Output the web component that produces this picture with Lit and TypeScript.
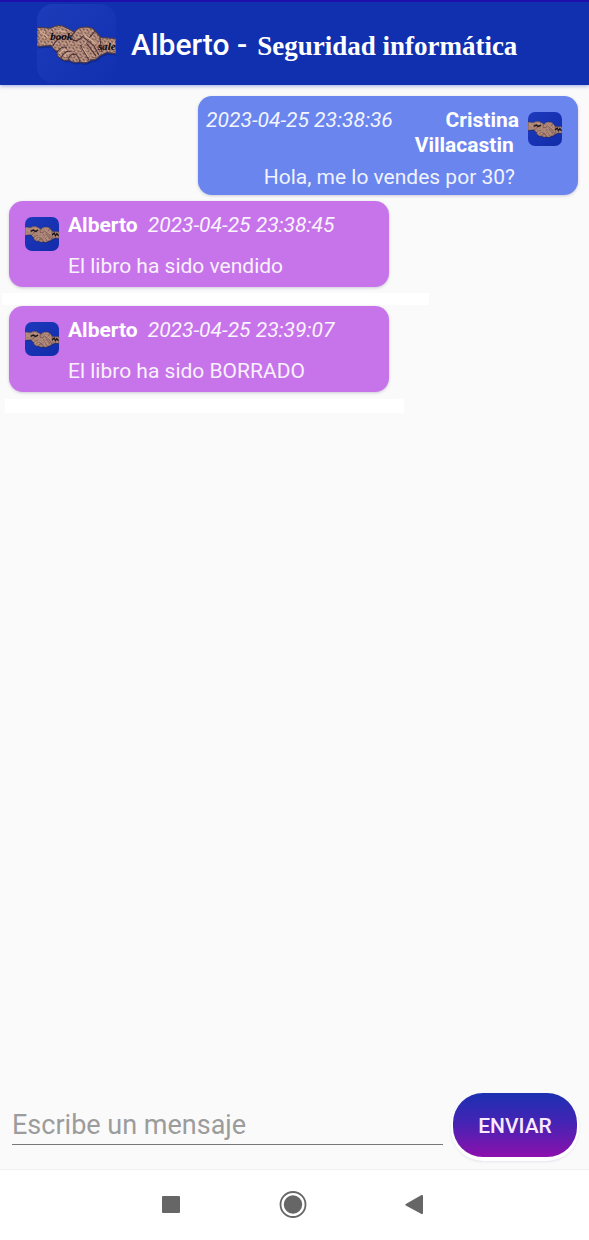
import { LitElement, html, css, svg, nothing } from "lit";
import { customElement, property } from "lit/decorators.js";

interface Message {
  author: string;
  date: string;
  text: string;
  mine: boolean;
}

const MESSAGES: Message[] = [
  { author: "Cristina Villacastin", date: "2023-04-25 23:38:36", text: "Hola, me lo vendes por 30?", mine: true },
  { author: "Alberto", date: "2023-04-25 23:38:45", text: "El libro ha sido vendido", mine: false },
  { author: "Alberto", date: "2023-04-25 23:39:07", text: "El libro ha sido BORRADO", mine: false },
];

const HANDS =
  "M0 23 L13 24 Q20 20 26 22 L32 25 L37 28 Q40 23 46 23 Q53 22 57 26 L63 33 L78 34 V49 L69 48 L62 51 Q58 56 54 55 Q48 60 42 57 Q36 59 31 55 Q27 57 24 54 Q19 52 20 47 Q16 45 14 41 L0 42 Z";

/* Shaking hands on a rounded blue tile. */
@customElement("book-logo")
export class BookLogo extends LitElement {
  @property({ type: Boolean }) large = false;

  static styles = css`
    :host {
      display: block;
    }
    svg {
      display: block;
      width: 100%;
      height: 100%;
    }
    .word {
      font: italic bold 11px "Liberation Serif", serif;
      fill: #0c0910;
    }
  `;

  render() {
    return html`
      <svg viewBox="0 0 78 78" aria-hidden="true">
        <defs>
          <linearGradient id="tile" x1="0" y1="0" x2="1" y2="1">
            <stop offset="0" stop-color=${this.large ? "#1d3cba" : "#1c3abc"} />
            <stop offset="1" stop-color=${this.large ? "#1030b0" : "#122caa"} />
          </linearGradient>
          <pattern id="skin" width="7" height="6" patternUnits="userSpaceOnUse">
            <rect width="7" height="6" fill="#b48c7a" />
            <path d="M0 1 L2 3 M3 0 L5 2 M5 4 L7 5 M1 5 L3 4" stroke="#66484a" stroke-width="1" />
            <path d="M2 1 L3 2 M5 3 L6 2 M3 5 L4 5 M0 4 L1 3" stroke="#dcb59c" stroke-width="1" />
          </pattern>
        </defs>
        <rect width="78" height="78" rx="16" fill="url(#tile)" />
        <path d=${HANDS} fill="#0b1f70" opacity="0.5" transform="translate(1 2)" />
        <path d=${HANDS} fill="url(#skin)" stroke="#4d3844" stroke-width="1" />
        <g fill="none" stroke="#4a3036" stroke-width="1" stroke-linecap="round">
          <path d="M37 28 Q32 32 36 36 Q41 37 45 32 L56 41 L61 50" />
          <path d="M20 47 Q25 41 29 43 M24 53 Q28 45 33 47 M31 54 Q34 48 38 50 M42 56 Q41 50 36 49" />
          <path d="M43 41 L51 55 M49 39 L58 51 M16 41 Q19 34 28 31 M57 27 L52 33 M62 33 L64 47" />
        </g>
        <path
          d="M22 49 Q26 44 29 46 M27 52 Q30 47 33 49 M46 30 L58 39 M45 43 L51 52 M3 27 L11 33 M21 26 L28 28"
          fill="none"
          stroke="#dcb59c"
          stroke-width="1"
        />
        ${this.large
          ? svg`<text class="word" x="13" y="36">book</text><text class="word" x="60" y="45">sale</text>`
          : svg`<path d="M62 41 L67 37 L70 43 L73 38 L77 43 M13 33 L19 30 L24 33 L30 30" fill="none" stroke="#1c1418" stroke-width="3" />`}
      </svg>
    `;
  }
}

@customElement("chat-message")
export class ChatMessage extends LitElement {
  @property({ attribute: false }) message!: Message;

  static styles = css`
    :host {
      display: block;
    }
    .bubble {
      display: flex;
      gap: 9px;
      box-sizing: border-box;
      padding: 12px 16px 8px;
      border-radius: 14px;
      background: #c774eb;
      color: #fff;
      font-size: 21px;
      line-height: 25px;
      box-shadow: 0 1px 3px rgb(120 110 150 / 35%);
    }
    .mine {
      flex-direction: row-reverse;
      padding: 12px 16px 5px 8px;
      background: #6a85ee;
    }
    .avatar {
      flex: none;
      width: 34px;
      height: 34px;
      margin-top: 4px;
    }
    .body {
      flex: 1;
      display: flex;
      flex-direction: column;
      gap: 16px;
    }
    .mine .body {
      gap: 7px;
      text-align: right;
    }
    .meta {
      display: flex;
      gap: 10px;
    }
    .mine .meta {
      flex-direction: row-reverse;
      justify-content: space-between;
    }
    .author {
      font-weight: 700;
    }
    .date {
      flex: none;
      font-style: italic;
      opacity: 0.92;
    }
    .text {
      margin: 0;
      opacity: 0.9;
    }
    .mine .text {
      padding-right: 4px;
    }
  `;

  render() {
    const m = this.message;
    return html`
      <article class="bubble ${m.mine ? "mine" : ""}">
        <book-logo class="avatar"></book-logo>
        <div class="body">
          <div class="meta">
            <span class="author">${m.author}${m.mine ? "\u00a0" : nothing}</span>
            <time class="date">${m.date}</time>
          </div>
          <p class="text">${m.text}</p>
        </div>
      </article>
    `;
  }
}

@customElement("app-root")
export class AppRoot extends LitElement {
  static styles = css`
    :host {
      display: flex;
      flex-direction: column;
      min-height: 100vh;
      background: #fafafa;
      font-family: Roboto, sans-serif;
    }
    .bar {
      display: flex;
      align-items: center;
      gap: 15px;
      box-sizing: border-box;
      height: 85px;
      padding: 0 37px;
      border-top: 2px solid #1e0fac;
      background: #1030b0;
      color: #fff;
      box-shadow: 0 1px 4px rgb(40 60 190 / 45%);
    }
    .logo {
      flex: none;
      width: 79px;
      height: 79px;
    }
    .title {
      display: flex;
      align-items: baseline;
      gap: 10px;
      margin: 0;
      padding-top: 4px;
      font-size: 30px;
      font-weight: 500;
      line-height: 36px;
    }
    .subject {
      font-family: "Liberation Serif", serif;
      font-size: 27px;
      font-weight: 700;
    }
    .chat {
      flex: 1;
      display: flex;
      flex-direction: column;
      padding: 11px 0;
    }
    .item {
      width: 64.5%;
      margin: 0 11px 6px 9px;
    }
    .item.mine {
      align-self: flex-end;
    }
    .strip {
      width: 72.5%;
      height: 12px;
      margin: 0 0 1px 2px;
      background: #fff;
    }
    .strip.last {
      width: 67.8%;
      height: 14px;
      margin: 1px 0 0 5px;
    }
    .composer {
      display: flex;
      align-items: center;
      gap: 10px;
      padding: 12px;
    }
    .field {
      flex: 1;
      min-width: 0;
      box-sizing: border-box;
      height: 40px;
      padding: 0;
      border: 0;
      border-bottom: 1px solid #777;
      outline: none;
      background: none;
      color: #333;
      font: 400 27px Roboto, sans-serif;
    }
    .field::placeholder {
      color: #9c9c9c;
      opacity: 1;
    }
    .send {
      width: 124px;
      height: 64px;
      padding: 2px 0 0;
      border: 0;
      border-radius: 30px;
      background: linear-gradient(#1c30b2, #4324b4 45%, #8c10ac);
      color: #fbeaff;
      font: 500 21px Roboto, sans-serif;
      box-shadow: 0 2px 0 2px #fff, 0 3px 3px 1px rgb(90 80 150 / 25%);
    }
    .nav {
      display: flex;
      align-items: center;
      justify-content: center;
      gap: 74px;
      box-sizing: border-box;
      height: 71px;
      padding-right: 4px;
      border-top: 1px solid #f0f0f0;
      background: #fff;
    }
    .key {
      width: 48px;
      height: 48px;
      padding: 10px;
      border: 0;
      background: none;
    }
    .key svg {
      display: block;
    }
  `;

  render() {
    return html`
      <header class="bar">
        <book-logo class="logo" large></book-logo>
        <h1 class="title"><span>Alberto -</span><span class="subject">Seguridad informática</span></h1>
      </header>
      <main class="chat">
        ${MESSAGES.map(
          (m, i) => html`
            ${i === 2 ? html`<div class="strip"></div>` : nothing}
            <chat-message class="item ${m.mine ? "mine" : ""}" .message=${m}></chat-message>
          `
        )}
        <div class="strip last"></div>
      </main>
      <form class="composer" @submit=${(e: Event) => e.preventDefault()}>
        <input class="field" type="text" placeholder="Escribe un mensaje" aria-label="Escribe un mensaje" />
        <button class="send" type="submit">ENVIAR</button>
      </form>
      <nav class="nav">
        <button class="key" type="button" aria-label="Recientes">
          <svg width="28" height="28" fill="#666"><rect x="5" y="5" width="18" height="17" rx="1" /></svg>
        </button>
        <button class="key" type="button" aria-label="Inicio">
          <svg width="28" height="28" fill="#666">
            <circle cx="14" cy="13.500" r="12.5" fill="none" stroke="#666" stroke-width="1.8" />
            <circle cx="14" cy="13.500" r="9.2" />
          </svg>
        </button>
        <button class="key" type="button" aria-label="Atrás">
          <svg width="28" height="28" fill="#666"><path d="M4.8 13 L20.500 4 Q22 3.500 22 5 V22 Q22 23.500 20.500 23 L4.800 14.500 Q3.500 13.800 4.800 13 Z" /></svg>
        </button>
      </nav>
    `;
  }
}
